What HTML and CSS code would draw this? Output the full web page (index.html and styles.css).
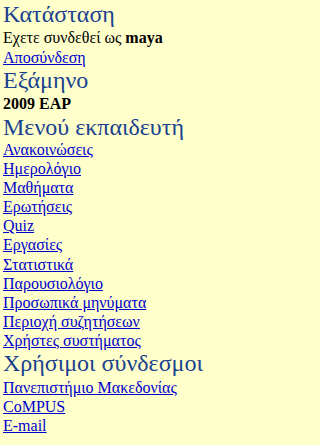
FILE: index.html
```html
<!DOCTYPE html>
<html lang="el">
<head>
<meta charset="utf-8">
<title>Μενού</title>
<link rel="stylesheet" href="styles.css">
</head>
<body>
<div class="menu">
  <h2 class="title">Κατάσταση</h2>
  <div class="line first">Εχετε συνδεθεί ως <b>maya</b></div>
  <div class="line"><a href="#">Αποσύνδεση</a></div>
  <h2 class="title">Εξάμηνο</h2>
  <div class="line first"><b>2009 EAP</b></div>
  <h2 class="title">Μενού εκπαιδευτή</h2>
  <ul class="links">
    <li><a href="#">Ανακοινώσεις</a></li>
    <li><a href="#">Ημερολόγιο</a></li>
    <li><a href="#">Μαθήματα</a></li>
    <li><a href="#">Ερωτήσεις</a></li>
    <li><a href="#">Quiz</a></li>
    <li><a href="#">Εργασίες</a></li>
    <li><a href="#">Στατιστικά</a></li>
    <li><a href="#">Παρουσιολόγιο</a></li>
    <li><a href="#">Προσωπικά μηνύματα</a></li>
    <li><a href="#">Περιοχή συζητήσεων</a></li>
    <li><a href="#">Χρήστες συστήματος</a></li>
  </ul>
  <h2 class="title">Χρήσιμοι σύνδεσμοι</h2>
  <ul class="links useful">
    <li><a href="#">Πανεπιστήμιο Μακεδονίας</a></li>
    <li><a href="#">CoMPUS</a></li>
    <li><a href="#">E-mail</a></li>
  </ul>
</div>
</body>
</html>
```

FILE: styles.css
```css
html, body {
  margin: 0;
  padding: 0;
  background: #ffffcc;
}
body {
  font-family: "Liberation Serif", "Times New Roman", serif;
  font-size: 16px;
  color: #000;
}
.menu {
  padding: 1px 4px 0 3px;
}
.title {
  margin: 0;
  font-size: 24px;
  font-weight: normal;
  line-height: 26px;
  color: #1a428f;
}
.line {
  line-height: 19px;
}
.line.first {
  margin-top: 1px;
  margin-bottom: 1px;
}
.links {
  list-style: none;
  margin: 0;
  padding: 0;
}
.links.useful {
  margin-top: 2px;
}
.links li {
  line-height: 19.1px;
}
a {
  color: #0000cc;
  text-decoration: underline;
}
```
